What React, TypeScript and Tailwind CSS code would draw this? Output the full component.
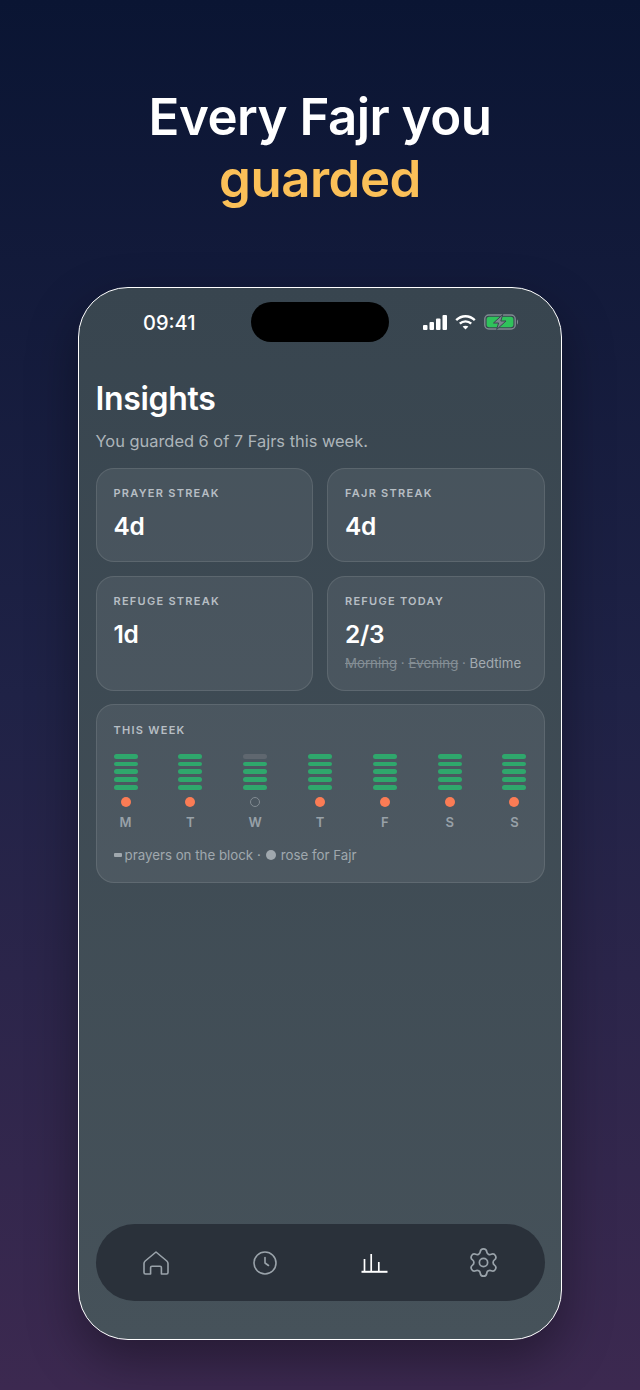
import { Settings } from 'lucide-react';

const font = { body: 'font-["Inter",sans-serif]', head: 'font-["Inter",sans-serif]' };

const days = [
  { label: 'M', rose: true, prayers: 5 },
  { label: 'T', rose: true, prayers: 5 },
  { label: 'W', rose: false, prayers: 4 },
  { label: 'T', rose: true, prayers: 5 },
  { label: 'F', rose: true, prayers: 5 },
  { label: 'S', rose: true, prayers: 5 },
  { label: 'S', rose: true, prayers: 5 },
];

function StatusIcons() {
  return (
    <div className="flex items-center gap-[8px]">
      <svg className="ml-[-1px]" width="24" height="15" viewBox="0 0 24 15" fill="#ffffff">
        <rect x="0" y="10" width="4.5" height="5" rx="1" />
        <rect x="6.5" y="7" width="4.5" height="8" rx="1" />
        <rect x="13" y="3.5" width="4.5" height="11.5" rx="1" />
        <rect x="19.5" y="0" width="4.5" height="15" rx="1" />
      </svg>
      <svg width="21" height="15" viewBox="0 0 21 15" fill="none" stroke="#ffffff" strokeWidth="2.4">
        <path d="M1.2 5.2 C6.5 0 14.5 0 19.8 5.2" />
        <path d="M4.8 8.7 C8 5.6 13 5.6 16.2 8.7" />
        <path d="M10.5 14.6 L7.6 11.6 C9.2 10.3 11.8 10.3 13.4 11.6 Z" fill="#ffffff" stroke="none" />
      </svg>
      <svg width="35" height="16" viewBox="0 0 35 16" fill="none">
        <rect x="0.8" y="1" width="30.4" height="14" rx="4" stroke="#7f8a90" strokeWidth="1.4" />
        <rect x="2.6" y="2.8" width="26.8" height="10.4" rx="2.6" fill="#2fc25b" />
        <path d="M33 5.5 C34.4 6 34.4 10 33 10.5 Z" fill="#7f8a90" />
        <path d="M18.8 0.5 L9.5 9 H14.6 L12.6 15.5 L22 7 H16.8 Z" fill="#7d878f" stroke="#3b4751" strokeWidth="1" />
      </svg>
    </div>
  );
}

function StatCard({ label, value, children }: { label: string; value: string; children?: React.ReactNode }) {
  return (
    <div className="rounded-[18px] border border-white/10 bg-white/[0.07] pt-[17px] pr-[18px] pl-[17px]">
      <div className="text-[11px] leading-[14px] font-semibold tracking-[0.115em] text-[#b7bec4]">{label}</div>
      <div className={`${font.head} mt-[10px] text-[24.5px] leading-[32px] font-semibold tracking-[-0.01em] text-white`}>{value}</div>
      {children}
    </div>
  );
}

function NavHome() {
  return (
    <svg width="26" height="24" viewBox="0 0 26 24" fill="none" stroke="#9aa3aa" strokeWidth="1.6" strokeLinejoin="round">
      <path d="M13 1 L2.2 10 Q1 11 1 12.6 V21.5 Q1 23 2.5 23 H7.6 V16.6 Q7.6 15.2 9 15.2 H17 Q18.4 15.2 18.4 16.6 V23 H23.5 Q25 23 25 21.5 V12.6 Q25 11 23.8 10 Z" />
    </svg>
  );
}

function NavClock() {
  return (
    <svg width="26" height="26" viewBox="0 0 26 26" fill="none" stroke="#9aa3aa" strokeWidth="1.6" strokeLinecap="round" strokeLinejoin="round">
      <circle cx="13" cy="13" r="11" />
      <path d="M13 7.5 V13 L16.5 15.5" />
    </svg>
  );
}

function NavBars() {
  return (
    <svg width="27" height="20" viewBox="0 0 27 20" fill="none" stroke="#ffffff" strokeWidth="1.7">
      <path d="M3.5 18 V6" />
      <path d="M10.2 18 V1" />
      <path d="M17.8 18 V9" />
      <path d="M0.5 18.8 H26.5" strokeWidth="2" />
    </svg>
  );
}

export default function App() {
  return (
    <div className={`${font.body} h-[1390px] w-[640px] overflow-hidden bg-gradient-to-b from-[#0a1533] via-[#1f2246] to-[#3c2950] pt-[86px]`}>
      <h1 className={`${font.head} text-center text-[51px] leading-[62px] font-semibold tracking-[-0.01em] text-white`}>
        Every Fajr you
        <br />
        <span className="text-[#fbc058]">guarded</span>
      </h1>

      <div className="mx-auto mt-[77px] flex h-[1053px] w-[484px] flex-col overflow-hidden rounded-[50px] border-[1.5px] border-white bg-gradient-to-b from-[#38454f] to-[#46525a] shadow-[0_20px_50px_rgba(0,0,0,0.35)]">
        <div className="grid grid-cols-[1fr_138px_1fr] items-start px-[42.5px] pt-[14px]">
          <span className="mt-[9px] pl-[21.5px] text-[20px] leading-[24px] font-medium text-white">09:41</span>
          <div className="h-[40px] rounded-full bg-black" />
          <div className="mt-[12px] flex justify-end">
            <StatusIcons />
          </div>
        </div>

        <div className="flex flex-1 flex-col px-[16.5px] pt-[37px] pb-[38px]">
          <h2 className={`${font.head} text-[32px] leading-[40px] font-semibold tracking-[-0.01em] text-white`}>Insights</h2>
          <p className="mt-[12px] text-[16.4px] leading-[20px] text-[#adb5ba]">You guarded 6 of 7 Fajrs this week.</p>

          <div className="mt-[17px] grid grid-cols-2 grid-rows-[94px_115px] gap-[14px]">
            <StatCard label="PRAYER STREAK" value="4d" />
            <StatCard label="FAJR STREAK" value="4d" />
            <StatCard label="REFUGE STREAK" value="1d" />
            <StatCard label="REFUGE TODAY" value="2/3">
              <div className="mt-[4px] text-[13.25px] leading-[18px] text-[#a3abb1]">
                <span className="text-[#848e95] line-through">Morning</span>
                <span className="text-[#848e95]"> · </span>
                <span className="text-[#848e95] line-through">Evening</span>
                <span className="text-[#848e95]"> · </span>
                Bedtime
              </div>
            </StatCard>
          </div>

          <div className="mt-[13px] rounded-[18px] border border-white/10 bg-white/[0.07] pt-[18px] pr-[17px] pb-[17px] pl-[17px]">
            <div className="text-[11px] leading-[14px] font-semibold tracking-[0.115em] text-[#b7bec4]">THIS WEEK</div>
            <div className="mt-[17px] flex justify-between">
              {days.map((day, i) => (
                <div key={i} className="flex w-[24px] flex-col items-center">
                  <div className="flex w-full flex-col gap-[3.1px]">
                    {[0, 1, 2, 3, 4].map((n) => (
                      <div
                        key={n}
                        className={n >= 5 - day.prayers ? 'h-[4.65px] rounded-full bg-[#2fa76c]' : 'h-[4.65px] rounded-full bg-[#5f676f]'}
                      />
                    ))}
                  </div>
                  <div
                    className={
                      day.rose
                        ? 'mt-[7px] h-[10px] w-[10px] rounded-full bg-[#fb7c55]'
                        : 'mt-[7px] h-[10px] w-[10px] rounded-full border border-[#828b92]'
                    }
                  />
                  <div className="mt-[6px] text-[13px] leading-[18px] font-semibold text-[#98a1a8]">{day.label}</div>
                </div>
              ))}
            </div>
            <div className="mt-[15px] mb-[1px] flex items-center text-[13.3px] leading-[18px] text-[#a0a8ae]">
              <span className="mr-[3px] h-[4px] w-[8px] rounded-[1px] bg-[#a0a8ae]" />
              prayers on the block ·
              <span className="mx-[5px] h-[10px] w-[10px] rounded-full bg-[#a0a8ae]" />
              rose for Fajr
            </div>
          </div>

          <nav className="mt-auto grid h-[77px] grid-cols-4 items-center rounded-full bg-[#2a313a] px-[6px]">
            <div className="flex justify-center"><NavHome /></div>
            <div className="flex justify-center"><NavClock /></div>
            <div className="flex justify-center"><NavBars /></div>
            <div className="flex justify-center"><Settings size={33} strokeWidth={1.25} color="#9aa3aa" /></div>
          </nav>
        </div>
      </div>
    </div>
  );
}
